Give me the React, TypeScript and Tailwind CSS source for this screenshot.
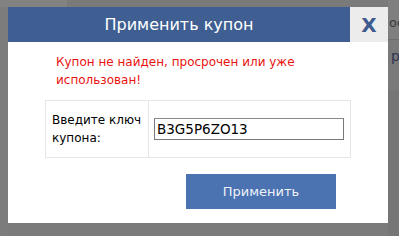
export default function App() {
  return (
    <div
      className="w-[399px] h-[236px] overflow-hidden bg-[#7b7b7b] flex flex-col"
      style={{ fontFamily: '"DejaVu Sans", Verdana, sans-serif' }}
    >
      {/* dimmed page strip on top */}
      <div className="flex h-[7px] shrink-0">
        <div className="w-[67px] bg-[#828282]" />
        <div className="flex-1 bg-[#7a7a7a]" />
      </div>

      <div className="flex flex-1">
        <div className="w-[8px] shrink-0 bg-[#7c7c7c]" />

        {/* dialog */}
        <div className="w-[380px] h-[216px] shrink-0 bg-white flex flex-col">
          <div className="flex h-[35px] shrink-0">
            <div className="flex-1 bg-[#3f5f93] flex items-center justify-center text-white text-[16px]">
              Применить купон
            </div>
            <div className="w-[38px] bg-[#ececec] flex items-center justify-center text-[#3e5b8e] text-[20px] font-bold">
              X
            </div>
          </div>

          <div className="pl-[48px] pr-[20px] pt-[11px] text-[12px] leading-[18px] text-[#e8130f]">
            Купон не найден, просрочен или уже использован!
          </div>

          <div className="ml-[37px] mt-[11px] w-[306px] h-[58px] border border-[#e6e6e6] flex">
            <div className="w-[103px] border-r border-[#e6e6e6] px-[6px] flex items-center text-[12px] leading-[18px] text-black">
              Введите ключ купона:
            </div>
            <div className="flex-1 flex items-center pl-[5px]">
              <input
                readOnly
                value="B3G5P6ZO13"
                className="w-[190px] h-[22px] border border-[#7a7a7a] border-t-[#8a8a8a] px-[2px] text-[13.5px] text-black outline-none"
                style={{ fontFamily: '"DejaVu Sans", Verdana, sans-serif' }}
              />
            </div>
          </div>

          <div className="flex justify-end pr-[52px] mt-[16px]">
            <button className="w-[150px] h-[35px] bg-[#4b73b1] text-[#eef2fa] text-[13px]">
              Применить
            </button>
          </div>
        </div>

        {/* dimmed page strip on the right */}
        <div className="flex-1 flex flex-col overflow-hidden -mt-[7px]">
          <div className="h-[40px] bg-[#7f7f7f] border-b border-[#6e6e6e] flex items-center pt-[6px] pl-[1px] text-[13px] text-[#3a3a3a] whitespace-nowrap">
            ос
          </div>
          <div className="h-[50px] bg-[#7a7a7a] pl-[3px] pt-[6px] text-[14px] text-[#2e3450] whitespace-nowrap">
            р
          </div>
          <div className="flex-1 bg-[#767676]" />
        </div>
      </div>
    </div>
  );
}
